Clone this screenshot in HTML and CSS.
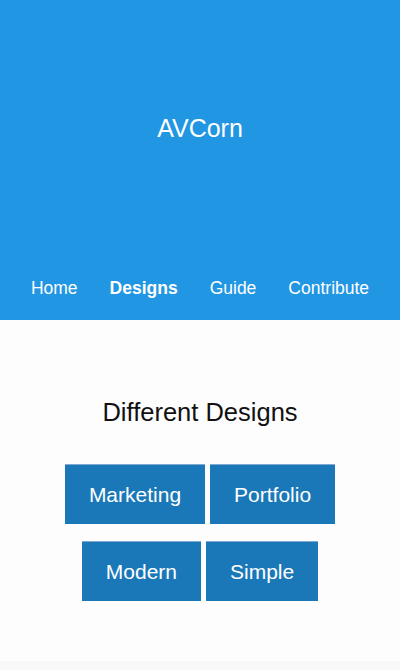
FILE: index.html
```html
<!DOCTYPE html>
<html lang="en">
<head>
<meta charset="utf-8">
<title>AVCorn</title>
<link rel="stylesheet" href="styles.css">
</head>
<body>
<header class="hero">
  <div class="hero-title">AVCorn</div>
  <nav class="nav">
    <a class="nav-link" href="#">Home</a>
    <a class="nav-link nav-link-active" href="#">Designs</a>
    <a class="nav-link" href="#">Guide</a>
    <a class="nav-link" href="#">Contribute</a>
  </nav>
</header>
<main class="designs">
  <h2 class="designs-title">Different Designs</h2>
  <div class="designs-list">
    <a class="design-btn" href="#">Marketing</a>
    <a class="design-btn" href="#">Portfolio</a>
    <a class="design-btn" href="#">Modern</a>
    <a class="design-btn" href="#">Simple</a>
  </div>
</main>
<footer class="foot"></footer>
</body>
</html>
```
FILE: styles.css
```css
* { box-sizing: border-box; }
html, body {
  margin: 0;
  padding: 0;
  height: 100%;
}
body {
  font-family: "Liberation Sans", Arial, sans-serif;
  background: #fdfdfd;
  color: #111;
  display: flex;
  flex-direction: column;
}
.hero {
  background: #2196e3;
  color: #fff;
  height: 320px;
  flex-shrink: 0;
  display: flex;
  flex-direction: column;
}
.hero-title {
  height: 256px;
  display: flex;
  align-items: center;
  justify-content: center;
  font-size: 25px;
}
.nav {
  flex: 1;
  display: flex;
  justify-content: center;
  align-items: center;
}
.nav-link {
  color: #fff;
  text-decoration: none;
  font-size: 17.5px;
  padding: 0 16px;
}
.nav-link-active { font-weight: bold; }
.designs {
  flex: 1;
  padding: 77px 20px 0;
  text-align: center;
}
.designs-title {
  margin: 0;
  font-weight: normal;
  font-size: 25.5px;
  line-height: 30px;
  color: #111;
}
.designs-list {
  margin-top: 37px;
  display: flex;
  flex-wrap: wrap;
  justify-content: center;
  column-gap: 5px;
  row-gap: 17px;
}
.design-btn {
  display: flex;
  align-items: center;
  height: 60px;
  padding: 0 24px;
  background: #1a78b9;
  border-top: 1px solid #7fa9cf;
  color: #fff;
  text-decoration: none;
  font-size: 21px;
}
.foot {
  height: 9px;
  flex-shrink: 0;
  background: #f8f8f8;
}
```
